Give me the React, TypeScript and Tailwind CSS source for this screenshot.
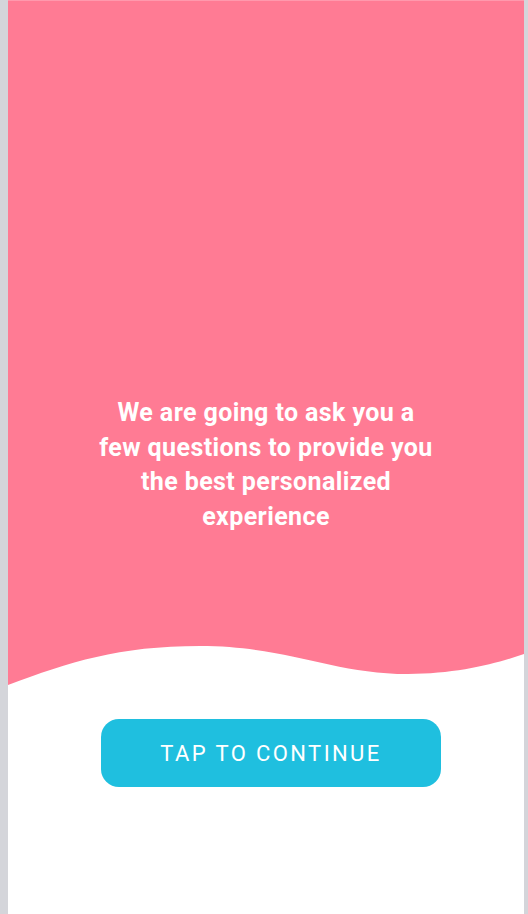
export default function App() {
  return (
    <div className="flex w-full h-[914px] bg-[#d4d5da]" style={{ fontFamily: "Roboto, 'Liberation Sans', sans-serif" }}>
      <div className="w-2 shrink-0" />
      <div className="flex-1 flex flex-col bg-white overflow-hidden">
        <div className="bg-[#ff7b94] h-[640px] shrink-0 flex flex-col items-center pt-[395px] border-t border-[#ff99ad]">
          <p className="text-center text-white font-bold text-[25px] tracking-[0.4px] leading-[34.5px]">
            We are going to ask you a
            <br />
            few questions to provide you
            <br />
            the best personalized
            <br />
            experience
          </p>
        </div>
        <svg viewBox="0 0 516 50" preserveAspectRatio="none" className="w-full h-[50px] block shrink-0">
          <path
            d="M0,45 C62,22 110,6 192,6 C280,6 325,34 400,34 C450,34 490,23 516,14 L516,0 L0,0 Z"
            fill="#ff7b94"
          />
        </svg>
        <div className="pt-[29px] pl-[93px]">
          <button className="w-[340px] h-[68px] rounded-[18px] bg-[#1fbfdf] text-white text-[22px] tracking-[2.4px] font-normal">
            TAP TO CONTINUE
          </button>
        </div>
      </div>
      <div className="w-1 shrink-0" />
    </div>
  );
}
